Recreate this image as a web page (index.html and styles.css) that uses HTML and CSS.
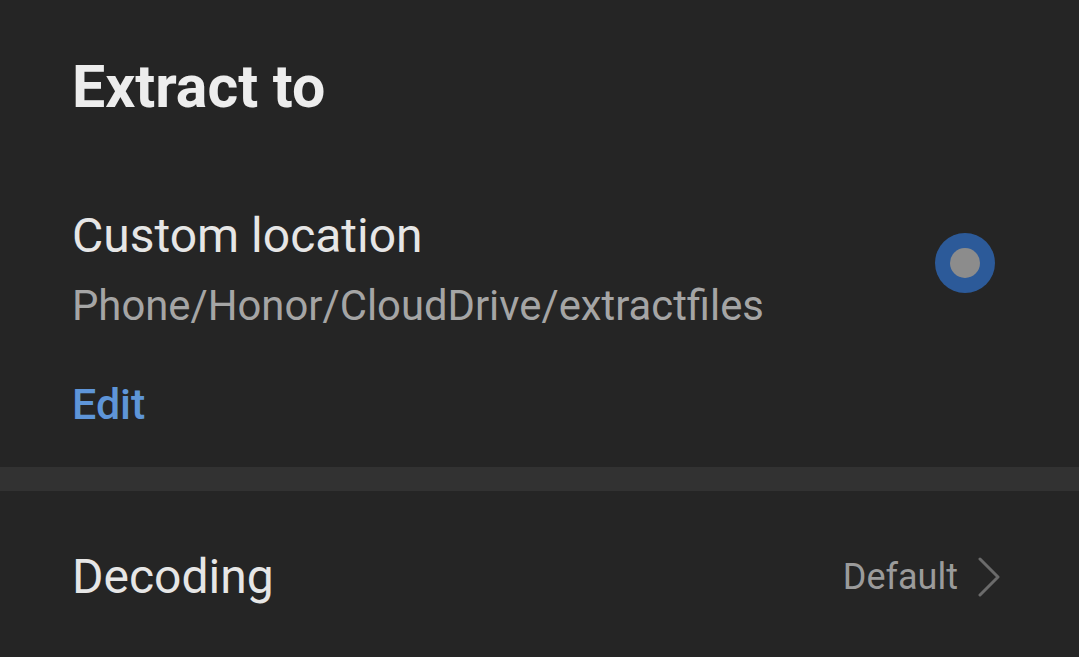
FILE: index.html
```html
<!DOCTYPE html>
<html>
<head>
<meta charset="utf-8">
<link rel="stylesheet" href="styles.css">
</head>
<body>
<div class="screen">
  <h1 class="title">Extract to</h1>
  <div class="option">
    <div class="option-text">
      <div class="option-name">Custom location</div>
      <div class="option-path">Phone/Honor/CloudDrive/extractfiles</div>
    </div>
    <div class="radio"><div class="radio-dot"></div></div>
  </div>
  <div class="edit">Edit</div>
  <div class="band"></div>
  <div class="row">
    <div class="row-name">Decoding</div>
    <div class="row-value">
      <span>Default</span>
      <svg class="chev" width="22" height="40" viewBox="0 0 22 40"><path d="M2 2 L20 20 L2 38" fill="none" stroke="#6b6b6b" stroke-width="3" stroke-linecap="round" stroke-linejoin="round"/></svg>
    </div>
  </div>
</div>
</body>
</html>
```

FILE: styles.css
```css
html, body {
  margin: 0;
  padding: 0;
  background: #252525;
}
body {
  font-family: Roboto, "Noto Sans", sans-serif;
  width: 1079px;
  height: 657px;
  overflow: hidden;
}
.screen {
  display: flex;
  flex-direction: column;
}
.title {
  margin: 0;
  padding: 52px 0 0 72px;
  font-size: 59px;
  font-weight: 700;
  color: #ededed;
  line-height: 70px;
}
.option {
  display: flex;
  align-items: flex-start;
  justify-content: space-between;
  padding: 0 84px 0 72px;
  margin-top: 84px;
}
.option-name {
  font-size: 48px;
  color: #e6e6e6;
  line-height: 60px;
}
.option-path {
  font-size: 41.8px;
  color: #a5a5a5;
  line-height: 50px;
  margin-top: 15px;
}
.radio {
  margin-top: 27px;
  width: 60px;
  height: 60px;
  border-radius: 50%;
  background: #2c5a99;
  display: flex;
  align-items: center;
  justify-content: center;
}
.radio-dot {
  width: 30px;
  height: 30px;
  border-radius: 50%;
  background: #8c8c8c;
}
.edit {
  padding-left: 72px;
  margin-top: 48px;
  font-size: 43px;
  font-weight: 500;
  color: #5e95d8;
  line-height: 50px;
}
.band {
  margin-top: 38px;
  height: 24px;
  background: #323232;
}
.row {
  display: flex;
  align-items: center;
  justify-content: space-between;
  padding: 56px 79px 0 72px;
}
.row-name {
  font-size: 48px;
  line-height: 60px;
  color: #e6e6e6;
}
.row-value {
  display: flex;
  align-items: center;
  gap: 20px;
  font-size: 36px;
  line-height: 44px;
  color: #9b9b9b;
}
.chev {
  display: block;
}
```
